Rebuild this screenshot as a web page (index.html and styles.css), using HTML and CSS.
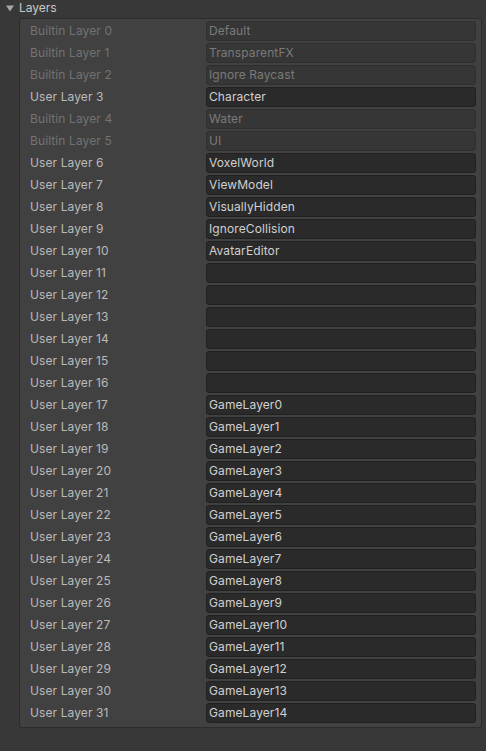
FILE: index.html
```html
<!DOCTYPE html>
<html>
<head>
<meta charset="utf-8">
<link rel="stylesheet" href="styles.css">
</head>
<body>
<div class="header">
  <svg class="caret" width="8" height="7" viewBox="0 0 8 7"><path d="M0 0.5 L8 0.5 L4 6.5 Z" fill="#a6a6a6"/></svg>
  <span class="title">Layers</span>
</div>
<div class="panel">
  <div class="row off"><span class="label">Builtin Layer 0</span><div class="field">Default</div></div>
  <div class="row off"><span class="label">Builtin Layer 1</span><div class="field">TransparentFX</div></div>
  <div class="row off"><span class="label">Builtin Layer 2</span><div class="field">Ignore Raycast</div></div>
  <div class="row"><span class="label">User Layer 3</span><div class="field">Character</div></div>
  <div class="row off"><span class="label">Builtin Layer 4</span><div class="field">Water</div></div>
  <div class="row off"><span class="label">Builtin Layer 5</span><div class="field">UI</div></div>
  <div class="row"><span class="label">User Layer 6</span><div class="field">VoxelWorld</div></div>
  <div class="row"><span class="label">User Layer 7</span><div class="field">ViewModel</div></div>
  <div class="row"><span class="label">User Layer 8</span><div class="field">VisuallyHidden</div></div>
  <div class="row"><span class="label">User Layer 9</span><div class="field">IgnoreCollision</div></div>
  <div class="row"><span class="label">User Layer 10</span><div class="field">AvatarEditor</div></div>
  <div class="row"><span class="label">User Layer 11</span><div class="field"></div></div>
  <div class="row"><span class="label">User Layer 12</span><div class="field"></div></div>
  <div class="row"><span class="label">User Layer 13</span><div class="field"></div></div>
  <div class="row"><span class="label">User Layer 14</span><div class="field"></div></div>
  <div class="row"><span class="label">User Layer 15</span><div class="field"></div></div>
  <div class="row"><span class="label">User Layer 16</span><div class="field"></div></div>
  <div class="row"><span class="label">User Layer 17</span><div class="field">GameLayer0</div></div>
  <div class="row"><span class="label">User Layer 18</span><div class="field">GameLayer1</div></div>
  <div class="row"><span class="label">User Layer 19</span><div class="field">GameLayer2</div></div>
  <div class="row"><span class="label">User Layer 20</span><div class="field">GameLayer3</div></div>
  <div class="row"><span class="label">User Layer 21</span><div class="field">GameLayer4</div></div>
  <div class="row"><span class="label">User Layer 22</span><div class="field">GameLayer5</div></div>
  <div class="row"><span class="label">User Layer 23</span><div class="field">GameLayer6</div></div>
  <div class="row"><span class="label">User Layer 24</span><div class="field">GameLayer7</div></div>
  <div class="row"><span class="label">User Layer 25</span><div class="field">GameLayer8</div></div>
  <div class="row"><span class="label">User Layer 26</span><div class="field">GameLayer9</div></div>
  <div class="row"><span class="label">User Layer 27</span><div class="field">GameLayer10</div></div>
  <div class="row"><span class="label">User Layer 28</span><div class="field">GameLayer11</div></div>
  <div class="row"><span class="label">User Layer 29</span><div class="field">GameLayer12</div></div>
  <div class="row"><span class="label">User Layer 30</span><div class="field">GameLayer13</div></div>
  <div class="row"><span class="label">User Layer 31</span><div class="field">GameLayer14</div></div>
</div>
</body>
</html>
```
FILE: styles.css
```css
html, body {
  margin: 0;
  padding: 0;
  background: #383838;
  font-family: Inter, "Liberation Sans", sans-serif;
  font-size: 12px;
  color: #c4c4c4;
}
.header {
  height: 18px;
  display: flex;
  align-items: center;
  padding-left: 6px;
  gap: 5px;
}
.caret {
  display: block;
  margin-top: -2px;
}
.title {
  color: #c8c8c8;
  line-height: 16px;
  margin-top: -2px;
}
.panel {
  margin: 0 4px 0 19px;
  background: #414141;
  border: 1px solid #2b2b2b;
  border-radius: 3px;
  padding: 2px 5px 4px 10px;
  display: flex;
  flex-direction: column;
  gap: 2px;
}
.row {
  display: flex;
  align-items: center;
  height: 20px;
}
.label {
  width: 176px;
  flex: none;
  color: #bababa;
  white-space: nowrap;
  line-height: 18px;
  margin-top: -1px;
  letter-spacing: 0.1px;
}
.field {
  flex: 1;
  height: 20px;
  box-sizing: border-box;
  background: #2a2a2a;
  border: 1px solid #212121;
  border-radius: 3px;
  padding: 0 2px 1px;
  line-height: 17px;
  color: #d0d0d0;
  white-space: nowrap;
  overflow: hidden;
  letter-spacing: 0.1px;
}
.row.off .label {
  color: #727272;
}
.row.off .field {
  background: #363636;
  border-color: #2f2f2f;
  color: #7a7a7a;
}
```
